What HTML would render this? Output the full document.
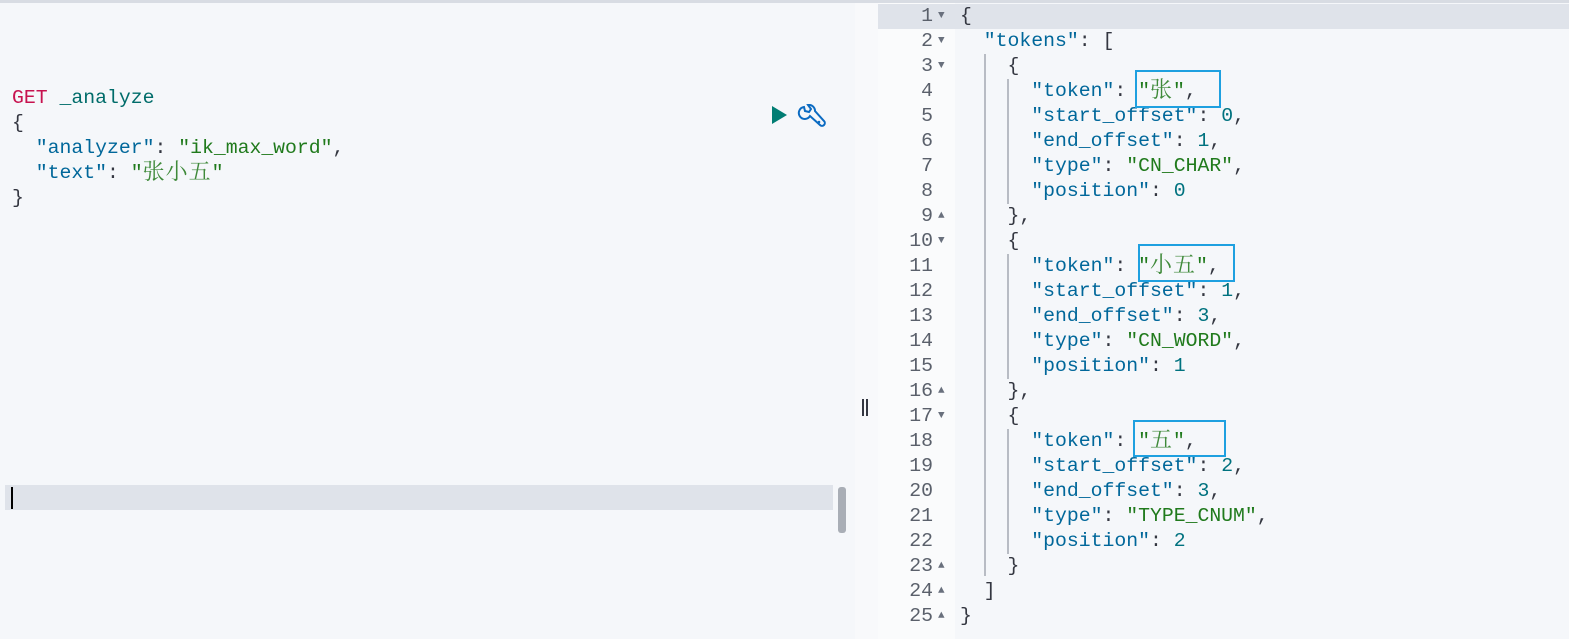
<!DOCTYPE html>
<html><head><meta charset="utf-8"><style>
*{margin:0;padding:0;box-sizing:border-box}
body{width:1569px;height:639px;overflow:hidden;background:#f5f7fa;position:relative;font-family:"Liberation Mono","Noto Sans CJK SC",monospace;font-size:19.8px}
.top{position:absolute;left:0;top:0;width:1569px;height:3px;background:#d8dce3}
.left{position:absolute;left:5px;top:3px;width:850px;height:636px;background:#f5f7fa}
.strip{position:absolute;left:855px;top:3px;width:23px;height:636px;background:#f8f9fb}
.gut{position:absolute;left:878px;top:3px;width:77px;height:636px;background:#fafbfc}
.code{position:absolute;left:955px;top:3px;width:614px;height:636px;background:#f5f7fa}
.ln{position:absolute;height:25px;line-height:25px;white-space:pre;color:#343741;overflow:visible}
.num{position:absolute;left:878px;width:55px;text-align:right;height:25px;line-height:25px;color:#5a606b}
.fa{position:absolute;left:938px;width:12px;font-size:11px;color:#69707d;height:25px;line-height:25px}
.k{color:#00679a}.s{color:#207a1c}.n{color:#00727f}.r{color:#c7124f}.p{color:#006c6a}
.cj{font-family:"Noto Serif CJK SC",serif;color:#3f8a3a;font-size:22px;line-height:10px;display:inline-block;letter-spacing:1px;vertical-align:-1px}
.g{position:absolute;width:2px;background:#b8bcc4}
.box{position:absolute;border:2px solid #1ea0e0}
</style></head><body>
<div class="top"></div>
<div class="left"></div><div class="strip"></div><div class="gut"></div><div class="code"></div>
<div style="position:absolute;left:5px;top:485px;width:828px;height:25px;background:#dfe3ea"></div>
<div style="position:absolute;left:11px;top:487px;width:2px;height:22px;background:#000"></div>
<div style="position:absolute;left:838px;top:487px;width:8px;height:46px;background:#a9aeb6;border-radius:3px"></div>
<div style="position:absolute;left:862px;top:399px;width:2px;height:17px;background:#343741"></div>
<div style="position:absolute;left:866px;top:399px;width:2px;height:17px;background:#343741"></div>
<div style="position:absolute;left:878px;top:4px;width:691px;height:25px;background:#dfe3ea"></div>
<div class="ln" style="left:12px;top:86px"><span class="r">GET</span> <span class="p">_analyze</span></div>
<div class="ln" style="left:12px;top:111px">{</div>
<div class="ln" style="left:12px;top:136px">  <span class="k">"analyzer"</span>: <span class="s">"ik_max_word"</span>,</div>
<div class="ln" style="left:12px;top:161px">  <span class="k">"text"</span>: <span class="s">"<span class="cj">张小五</span>"</span></div>
<div class="ln" style="left:12px;top:186px">}</div>
<svg style="position:absolute;left:770px;top:104px" width="60" height="30">
<path d="M2 2 L17 11 L2 20 Z" fill="#017d73"/>
<g fill="none" stroke="#0b6bc2" stroke-width="2"><path d="M34 3 a6 6 0 1 0 6 9 l10 9 a2.5 2.5 0 0 0 4 -4 l-9 -10 a6 6 0 0 0 -7 -6 l3 4 -2 3 -4 -1 z"/></g>
<circle cx="49" cy="18" r="1.3" fill="#0b6bc2"/>
</svg>
<div class="g" style="left:984px;top:54px;height:522px"></div>
<div class="g" style="left:1007px;top:79px;height:125px"></div>
<div class="g" style="left:1007px;top:254px;height:125px"></div>
<div class="g" style="left:1007px;top:429px;height:125px"></div>
<div id="r"></div>
<div class="box" style="left:1135px;top:70px;width:86px;height:38px"></div>
<div class="box" style="left:1138px;top:244px;width:97px;height:38px"></div>
<div class="box" style="left:1133px;top:420px;width:93px;height:37px"></div>
<script>
var L=[
['{','v'],
['  <span class="k">"tokens"</span>: [','v'],
['    {','v'],
['      <span class="k">"token"</span>: <span class="s">"<span class="cj">张</span>"</span>,',''],
['      <span class="k">"start_offset"</span>: <span class="n">0</span>,',''],
['      <span class="k">"end_offset"</span>: <span class="n">1</span>,',''],
['      <span class="k">"type"</span>: <span class="s">"CN_CHAR"</span>,',''],
['      <span class="k">"position"</span>: <span class="n">0</span>',''],
['    },','^'],
['    {','v'],
['      <span class="k">"token"</span>: <span class="s">"<span class="cj">小五</span>"</span>,',''],
['      <span class="k">"start_offset"</span>: <span class="n">1</span>,',''],
['      <span class="k">"end_offset"</span>: <span class="n">3</span>,',''],
['      <span class="k">"type"</span>: <span class="s">"CN_WORD"</span>,',''],
['      <span class="k">"position"</span>: <span class="n">1</span>',''],
['    },','^'],
['    {','v'],
['      <span class="k">"token"</span>: <span class="s">"<span class="cj">五</span>"</span>,',''],
['      <span class="k">"start_offset"</span>: <span class="n">2</span>,',''],
['      <span class="k">"end_offset"</span>: <span class="n">3</span>,',''],
['      <span class="k">"type"</span>: <span class="s">"TYPE_CNUM"</span>,',''],
['      <span class="k">"position"</span>: <span class="n">2</span>',''],
['    }','^'],
['  ]','^'],
['}','^']];
var h='';
for(var i=0;i<L.length;i++){var t=4+i*25;
h+='<div class="num" style="top:'+t+'px">'+(i+1)+'</div>';
if(L[i][1])h+='<div class="fa" style="top:'+t+'px">'+(L[i][1]=='v'?'▼':'▲')+'</div>';
h+='<div class="ln" style="left:960px;top:'+t+'px">'+L[i][0]+'</div>';}
document.getElementById('r').innerHTML=h;
</script>
</body></html>
